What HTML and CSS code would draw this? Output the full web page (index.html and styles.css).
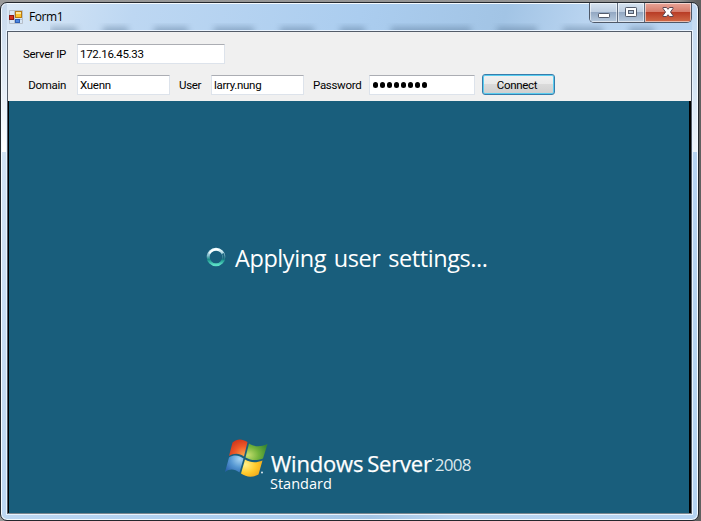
FILE: index.html
```html
<!DOCTYPE html>
<html lang="en">
<head>
<meta charset="utf-8">
<title>Form1</title>
<link rel="stylesheet" href="styles.css">
</head>
<body>
<main class="window">
  <header class="titlebar">
    <svg class="app-icon" width="14" height="14" viewBox="0 0 14 14">
      <path d="M.5 .5h13v13H.5zM5.500 0v14M0 9.500h14" fill="none" stroke="#b7bfc9"/>
      <rect x="6.500" y="1.500" width="6" height="6" fill="#fbc52e" stroke="#b97a12"/>
      <path d="M7 2h5v2H7z" fill="#ffe89a"/>
      <rect x=".5" y="5.500" width="4" height="4" fill="#d3301c" stroke="#8e1a12"/>
      <rect x="6.500" y="9.500" width="4" height="3" fill="#4c86df" stroke="#2d5fb5"/>
    </svg>
    <h1 class="title">Form1</h1>
    <div class="shades"><i class="w1"></i><i class="w2"></i><i class="w3"></i><i class="w4"></i><i class="w3"></i><i class="w2"></i><i class="w5"></i><i class="w4"></i><i class="w4"></i><i class="w2"></i></div>
    <div class="caption-buttons">
      <span class="cap min"><svg width="14" height="14" viewBox="0 0 14 14"><rect x="1.500" y="8.500" width="11" height="4" rx=".7" fill="#fff" stroke="#535b6b"/></svg></span>
      <span class="cap max"><svg width="14" height="14" viewBox="0 0 14 14"><rect x="1.500" y="2.500" width="11" height="9" rx=".7" fill="#fff" stroke="#535b6b"/><rect x="4.500" y="5.500" width="5" height="3" fill="#a9bcd2" stroke="#535b6b"/></svg></span>
      <span class="cap close"><svg width="14" height="14" viewBox="0 0 14 14"><path d="M2 2.500h3.500L7 4.300l1.500-1.800H12v1L9.500 7l2.500 3.500v1H8.500L7 9.700l-1.500 1.800H2v-1L4.500 7 2 3.500z" fill="#fff" stroke="#5b4652"/></svg></span>
    </div>
  </header>
  <section class="client">
    <form class="form">
      <div class="row first">
        <label class="label lead">Server IP</label><span class="field ip">172.16.45.33</span>
      </div>
      <div class="row">
        <label class="label lead">Domain</label><span class="field domain">Xuenn</span>
        <label class="label user-label">User</label><span class="field user">larry.nung</span>
        <label class="label pass-label">Password</label><span class="field pass"><i></i><i></i><i></i><i></i><i></i><i></i><i></i><i></i></span>
        <button class="connect" type="button">Connect</button>
      </div>
    </form>
    <div class="remote">
      <div class="status">
        <svg class="spinner" width="20" height="20" viewBox="0 0 20 20">
          <defs><linearGradient id="ring" x1="0" y1="0" x2="0" y2="1"><stop offset="0" stop-color="#e8fbff"/><stop offset=".4" stop-color="#86bfcf"/><stop offset=".65" stop-color="#178b86"/><stop offset="1" stop-color="#5be0c6"/></linearGradient></defs>
          <circle cx="10" cy="10" r="7.800" fill="none" stroke="url(#ring)" stroke-width="3"/>
          <path d="M3.500 6.500A7.500 7.500 0 0 1 13 3" fill="none" stroke="#fff" stroke-width="1.600"/>
          <path d="M16.800 6.500a8 8 0 0 1 .4 6" fill="none" stroke="#1f6680" stroke-width="2"/>
        </svg>
        <span class="status-text">Applying user settings...</span>
      </div>
      <div class="brand">
        <svg class="flag" width="44" height="40" viewBox="0 0 44 40">
          <defs>
            <radialGradient id="r" cx=".8" cy=".9" r="1"><stop offset="0" stop-color="#f8a34a"/><stop offset=".5" stop-color="#ef5928"/><stop offset="1" stop-color="#c9321b"/></radialGradient>
            <radialGradient id="g" cx=".1" cy=".7" r="1"><stop offset="0" stop-color="#c7df70"/><stop offset=".5" stop-color="#74b43c"/><stop offset="1" stop-color="#368532"/></radialGradient>
            <radialGradient id="b" cx=".8" cy=".2" r="1"><stop offset="0" stop-color="#a7d5f3"/><stop offset=".5" stop-color="#5698d3"/><stop offset="1" stop-color="#2861ab"/></radialGradient>
            <radialGradient id="y" cx=".2" cy=".3" r="1"><stop offset="0" stop-color="#fff08a"/><stop offset=".5" stop-color="#ffca2b"/><stop offset="1" stop-color="#eb9a16"/></radialGradient>
          </defs>
          <path d="M7.500 3.500C12-.5 17-.5 22.500 3L19 17.500C14 14 9 14 4 17z" fill="url(#r)"/>
          <path d="M24 4.500C30 8 35 8 42.500 5L38 19.500C31 22 26 21.500 20.500 18.500z" fill="url(#g)"/>
          <path d="M4 18.500C9 15.500 13.500 16 18.500 19.500L14.500 33.500C9.500 30 5 29.500 0 33z" fill="url(#b)"/>
          <path d="M20 20.500C26 24 31 24 37.500 21.500L33.500 35.500C27 39 21 38 16 34.500z" fill="url(#y)"/>
          <circle cx="37" cy="33.500" r="1" fill="#dce9ef"/>
        </svg>
        <div class="wordmark">
          <div class="product"><span class="windows">Windows</span><span class="server">Server</span><span class="dot"></span><span class="year">2008</span></div>
          <div class="edition">Standard</div>
        </div>
      </div>
    </div>
  </section>
</main>
</body>
</html>
```
FILE: styles.css
```css
* { box-sizing: border-box; }
body {
  margin: 0;
  padding-top: 2px;
  width: 701px;
  height: 521px;
  overflow: hidden;
  background: linear-gradient(90deg, #999 0, #929292 680px, #606060 697px);
  font-family: Roboto, "Liberation Sans", sans-serif;
}
.window {
  display: flex;
  flex-direction: column;
  width: 699px;
  height: 519px;
  padding: 0 6px 6px 5px;
  border: 1px solid #24282e;
  border-radius: 7px;
  box-shadow: inset 0 0 0 1px #f4faff;
  background:
    linear-gradient(#c6d8ec 0, #dce7f3 60px, #fff 149px, transparent 149px) 0 0 / 6px 100% no-repeat,
    linear-gradient(#c1d9f3 0, #d1e2f3 75px, #eef4fa 149px, transparent 149px) 100% 0 / 6px 100% no-repeat,
    linear-gradient(105deg, #dce9f6 0, #bdd7f2 130px, #abcdef 350px, #a2c4e5 490px, #b9d4f0 570px, #b5d3f2 100%);
}
.titlebar {
  position: relative;
  display: flex;
  flex: 0 0 28px;
  padding: 0 0 0 3px;
}
.app-icon { margin-top: 7px; }
.title {
  z-index: 1;
  margin: 5px 0 0 6px;
  font: 12px/18px "Open Sans", sans-serif;
  letter-spacing: -.4px;
  color: #000;
}
.shades {
  position: absolute;
  inset: 20px 30px 1px 44px;
  display: flex;
  gap: 26px;
  padding-top: 4px;
  overflow: hidden;
}
.shades i { height: 12px; background: #4d6b8a; opacity: .42; filter: blur(3px); }
.w1 { width: 27px; } .w2 { width: 25px; } .w3 { width: 34px; } .w4 { width: 40px; } .w5 { width: 80px; }
.caption-buttons {
  z-index: 1;
  display: flex;
  width: 103px;
  height: 20px;
  margin-left: auto;
  border: 1px solid #4e5868;
  border-top: 0;
  border-radius: 0 0 5px 5px;
  overflow: hidden;
}
.cap {
  display: flex;
  justify-content: center;
  padding-top: 2px;
  border-right: 1px solid #5d6b7e;
  background: linear-gradient(#d6e3f0 0, #bdcde0 48%, #93a8c3 50%, #b7cade 100%);
  box-shadow: inset 0 0 0 1px rgba(255,255,255,.55);
}
.min { width: 28px; }
.max { width: 27px; }
.close { flex: 1; border: 0; background: linear-gradient(#e9a598 0, #d67c6b 46%, #b93d26 50%, #d16b48 100%); }
.client {
  display: flex;
  flex: 1;
  flex-direction: column;
  margin-left: 1px;
  border: 1px solid #535c69;
  border-bottom-color: #7c8790;
  box-shadow: 0 0 0 1px #eaf4ff;
  min-height: 0;
}
.form { flex: 0 0 69px; padding-top: 12px; background: #f0f0f0; }
.row { display: flex; align-items: flex-start; height: 21px; }
.first { margin-bottom: 10px; }
.label, .field, .connect {
  font-size: 11.5px;
  line-height: 21px;
  letter-spacing: -.3px;
  color: #000;
  white-space: nowrap;
}
.lead { width: 59px; margin-right: 10px; padding-right: 1px; text-align: right; }
.field {
  display: block;
  height: 20px;
  padding-left: 2px;
  line-height: 19px;
  background: #fff;
  border: 1px solid #dde3eb;
  border-top-color: #abadb3;
}
.ip { width: 148px; letter-spacing: -.3px; }
.domain { width: 93px; }
.user { width: 93px; }
.pass { display: flex; gap: 1.600px; align-items: center; width: 106px; padding-left: 3px; }
.pass i { width: 5.400px; height: 5.400px; border-radius: 50%; background: #000; }
.user-label { width: 32px; margin-left: 9px; }
.pass-label { width: 56px; margin-left: 9px; }
.connect {
  width: 73px;
  height: 21px;
  margin: -1px 0 0 7px;
  padding: 1px 3px 0 0;
  line-height: 19px;
  font-family: inherit;
  border: 1px solid #387cab;
  border-radius: 3px;
  background: linear-gradient(#f1f1f1 0, #e9e9e9 48%, #dadada 50%, #cfcfcf);
  box-shadow: inset 0 0 0 1px #59cdf0;
}
.remote {
  display: flex;
  flex: 1;
  flex-direction: column;
  border-left: 1px solid #000;
  border-right: 2px solid #000;
  background: #195e7c;
  color: #fff;
  font-family: "Open Sans", "Noto Sans", sans-serif;
}
.status { display: flex; height: 34px; margin: 141px 0 0 197px; }
.spinner { margin-top: 5px; }
.status-text {
  margin-left: 9px;
  font-size: 23.5px;
  line-height: 33px;
  letter-spacing: -.42px;
  word-spacing: 2px;
  white-space: nowrap;
}
.brand { display: flex; margin: 162px 0 0 216px; }
.flag { margin-top: 1px; }
.wordmark { padding: 12px 0 0 1px; }
.product { display: flex; height: 25px; line-height: 26px; white-space: nowrap; }
.windows, .server { font-size: 22px; letter-spacing: -.2px; -webkit-text-stroke: .25px #fff; }
.windows { margin-left: 1px; }
.server { margin-left: 4px; }
.dot { width: 2px; height: 2px; margin: 8px 1px 0 0; background: #a4c0cc; }
.year { padding-top: 2px; font-size: 17px; letter-spacing: -.7px; color: #dce8ed; }
.edition { font-size: 14.5px; line-height: 18px; }
```
